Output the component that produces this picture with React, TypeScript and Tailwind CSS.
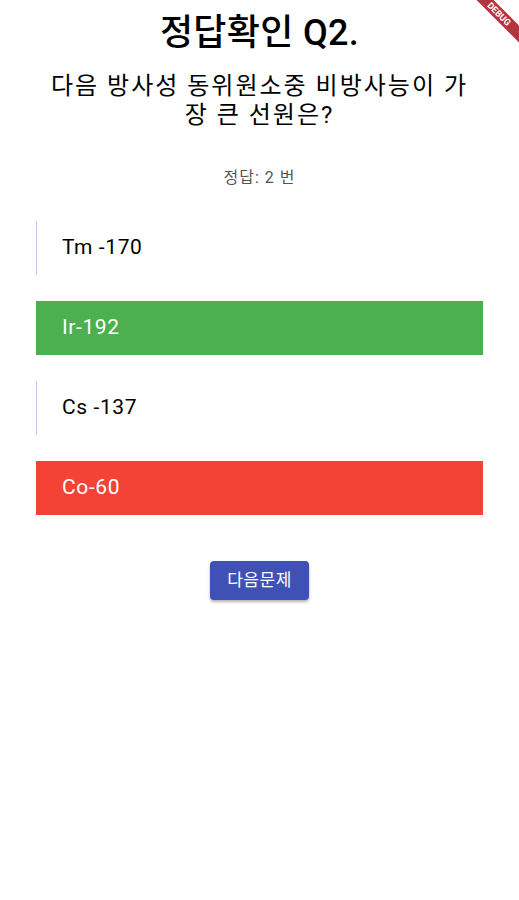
export default function App() {
  const options = [
    { label: 'Tm -170', state: 'none' },
    { label: 'Ir-192', state: 'correct' },
    { label: 'Cs -137', state: 'none' },
    { label: 'Co-60', state: 'wrong' },
  ];

  return (
    <div
      className="relative w-[519px] h-[900px] bg-white overflow-hidden"
      style={{ fontFamily: "Roboto, 'Noto Sans CJK KR', sans-serif" }}
    >
      <div className="flex flex-col items-center pt-[11px]">
        <h1 className="text-[36px] leading-[44px] font-medium tracking-[0.3px] text-black">정답확인 Q2.</h1>
        <p className="mt-[17px] px-[20px] text-center text-[24px] leading-[29px] tracking-[2px] text-black">
          다음 방사성 동위원소중 비방사능이 가
          <br />
          장 큰 선원은?
        </p>
        <p className="mt-[38px] text-[16px] leading-[20px] tracking-[1px] text-[#555]">정답: 2 번</p>
      </div>

      <div className="flex flex-col gap-[26px] px-[36px] mt-[33px]">
        {options.map((o) => (
          <div
            key={o.label}
            className={
              o.state === 'correct'
                ? 'h-[54px] flex items-center pl-[26px] bg-[#4caf50] text-white text-[21px] tracking-[0.6px]'
                : o.state === 'wrong'
                ? 'h-[54px] flex items-center pl-[26px] bg-[#f44336] text-white text-[21px] tracking-[0.6px]'
                : 'h-[54px] flex items-center pl-[25px] border-l border-[#c5c8e6] text-black text-[21px] tracking-[0.6px]'
            }
          >
            {o.label}
          </div>
        ))}
      </div>

      <div className="flex justify-center mt-[46px]">
        <button className="w-[99px] h-[39px] rounded-[4px] bg-[#3f51b5] text-white text-[17px] tracking-[0.5px] shadow-[0_2px_3px_rgba(0,0,0,0.3)]">
          다음문제
        </button>
      </div>

      {/* debug banner */}
      <div className="absolute top-[8px] right-[-30px] w-[100px] h-[12px] rotate-45 bg-[#b3343f] flex items-center justify-center">
        <span className="text-[9px] font-bold text-white leading-none">DEBUG</span>
      </div>
    </div>
  );
}
